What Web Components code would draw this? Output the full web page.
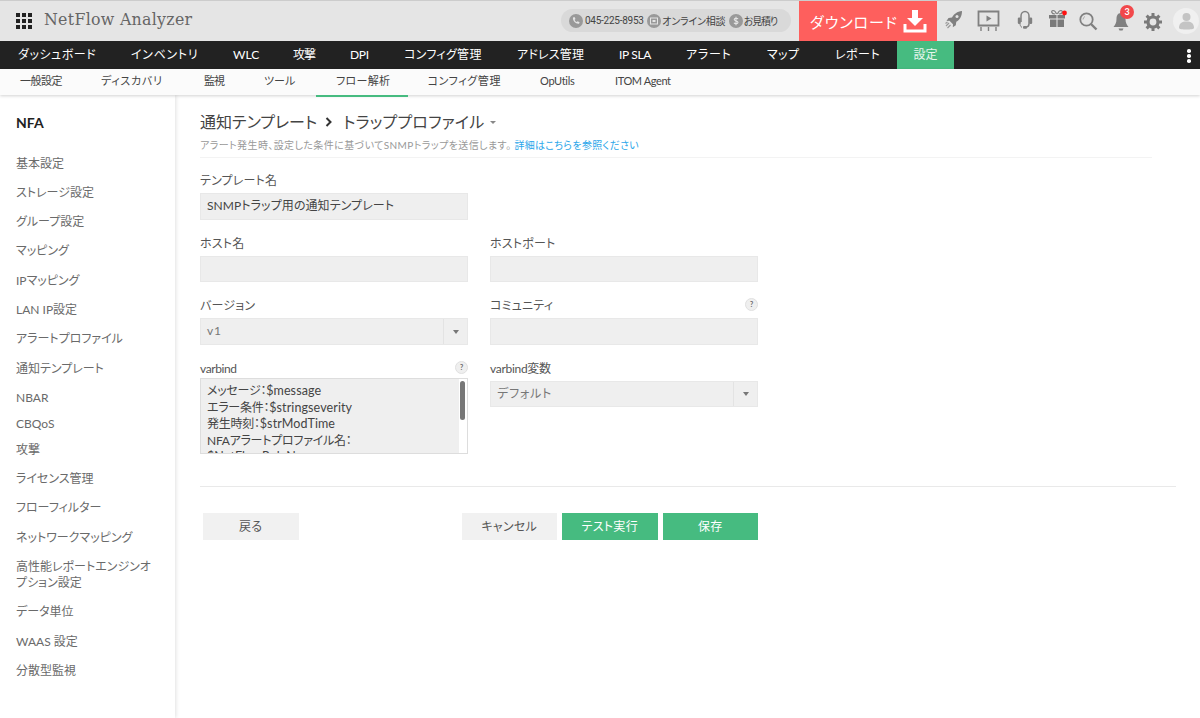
<!DOCTYPE html>
<html lang="ja"><head><meta charset="utf-8"><title>NetFlow Analyzer</title>
<style>
html,body{margin:0;padding:0;background:#fff;height:718px;overflow:hidden}
body{font-family:Lato,"Noto Sans CJK JP",sans-serif;font-feature-settings:"palt";color:#555;font-size:12px}
</style></head><body>
<nf-header></nf-header>
<nf-nav></nf-nav>
<nf-subnav></nf-subnav>
<nf-main>
  <nf-sidebar slot="side"></nf-sidebar>
  <nf-form></nf-form>
</nf-main>
<script>
function def(name,html){customElements.define(name,class extends HTMLElement{constructor(){super();this.attachShadow({mode:'open'}).innerHTML=html;}});}
const ic={
phone:'<svg width="14" height="14" viewBox="0 0 14 14"><circle cx="7" cy="7" r="7" fill="#999"/><path d="M4 3.600l1.500-.6 1 2-.9.8c.3 1 1.200 1.900 2.200 2.300l.8-.9 2 1-.6 1.600c-3 .6-6.600-3-6-6.200z" fill="#e4e4e4"/></svg>',
chat:'<svg width="14" height="14" viewBox="0 0 14 14"><circle cx="7" cy="7" r="7" fill="#999"/><rect x="3.500" y="4" width="7" height="6" fill="none" stroke="#e4e4e4"/><rect x="5.500" y="6" width="3" height="2" fill="#e4e4e4"/></svg>',
dollar:'<svg width="14" height="14" viewBox="0 0 14 14"><circle cx="7" cy="7" r="7" fill="#999"/><path d="M9 5c-.4-1-3.800-1.200-3.800.6 0 1.700 3.800 1 3.800 2.800 0 1.700-3.500 1.500-4 .4M7 2.800v8.400" fill="none" stroke="#e4e4e4" stroke-width="1.100"/></svg>'
};
def('nf-header',`<style>
:host{display:flex;align-items:stretch;height:40px;background:#e5e5e5;border-top:1px solid #ccc;position:relative}
.grid{display:grid;grid-template-columns:repeat(3,4px);grid-auto-rows:4px;gap:2px;margin:12px 12px 0 16px;height:16px}
.grid i{background:#222;display:block}
.title{font:17px/37px "DejaVu Serif",serif;letter-spacing:.3px;color:#666;transform-origin:left center;transform:scaleX(.93);width:160px;white-space:nowrap}
.pill{margin:8px 8px 0 auto;height:23px;width:230px;box-sizing:border-box;border-radius:12px;background:#d9d9d9;display:flex;align-items:center;padding-left:8px;font-size:10px;letter-spacing:-.2px;color:#444;white-space:nowrap}
.pill svg{flex:none;margin-right:1px}.pill svg:first-child{margin-right:2px}.pill span{margin-right:3.500px}
.num{font-family:Roboto,sans-serif;letter-spacing:-.25px;font-size:10px}
.est{letter-spacing:-1.200px}
.dl{width:138px;background:#fe5f5d;color:#fff;font-size:15px;display:flex;align-items:center;padding-left:11px;box-sizing:border-box;gap:5px;letter-spacing:1px}
.icons{display:flex;align-items:center;width:263px;position:relative}
.icons svg{position:absolute}
.badge{position:absolute;left:183px;top:4px;width:14px;height:14px;border-radius:50%;background:#f2484b;color:#fff;font:bold 9px/14px Lato,sans-serif;text-align:center}
</style>
<div class="grid"><i></i><i></i><i></i><i></i><i></i><i></i><i></i><i></i><i></i></div>
<div class="title">NetFlow Analyzer</div>
<div class="pill">${ic.phone}<span class="num">045-225-8953</span>${ic.chat}<span>オンライン相談</span>${ic.dollar}<span class="est">お見積り</span></div>
<div class="dl"><span>ダウンロード</span><svg width="24" height="24" viewBox="0 0 24 24"><path d="M9 1h6v8h5l-8 8-8-8h5z" fill="#fff"/><path d="M2 15v7h20v-7" fill="none" stroke="#fff" stroke-width="3"/></svg></div>
<div class="icons">
<svg style="left:7px;top:9px" width="20" height="20" viewBox="0 0 20 20"><path d="M18 1c-5 .5-8 3-10 6.500L4.500 8 2.500 11l3-.2 3.500 3.500-.2 3 3-2 .5-3.500C16 9.800 18 6 18 1z" fill="#808080"/><circle cx="13" cy="6.500" r="1.500" fill="#e5e5e5"/><path d="M5 13l-3 3M6.500 15l-3 3M3.500 12l-2 1.500" stroke="#999" stroke-width="1.200"/></svg>
<svg style="left:40px;top:9px" width="23" height="22" viewBox="0 0 23 22"><path d="M1.500 1.500h20v14h-20z" fill="none" stroke="#808080" stroke-width="1.800"/><path d="M9.500 5.500l5 3-5 3z" fill="#808080"/><path d="M4 17v4M11.500 17v4M19 17v4" stroke="#808080" stroke-width="1.400"/></svg>
<svg style="left:80px;top:9px" width="16" height="22" viewBox="0 0 16 22"><path d="M4 12V6a4 4.500 0 0 1 8 0v8c0 2.500-1.500 3-3.500 3.500" fill="none" stroke="#808080" stroke-width="1.500"/><path d="M5 17.500c-1.500-1-2-2.500-2-4" fill="none" stroke="#808080" stroke-width="1"/><rect x=".8" y="7.500" width="3" height="6.500" rx="1.200" fill="#808080"/><rect x="12.200" y="7.500" width="3" height="6.500" rx="1.200" fill="#808080"/><rect x="6" y="16" width="4" height="2.800" rx="1" fill="#808080"/></svg>
<svg style="left:111px;top:8px" width="20" height="20" viewBox="0 0 20 20"><path d="M7 5C3 5 3 1.500 5 1.500S8 3.500 8.500 5M11 5c4 0 4-3.500 2-3.500S10 3.500 9.500 5" fill="none" stroke="#808080" stroke-width="1.200"/><path d="M1 6h7.500v3.500H1zM9.500 6H17v3.500H9.500zM2 10.500h6.500V18H2zM9.500 10.500H16V18H9.500z" fill="#7a7a7a"/><circle cx="16.500" cy="4" r="2.400" fill="#f11"/></svg>
<svg style="left:142px;top:11px" width="19" height="20" viewBox="0 0 19 20"><circle cx="7.500" cy="7.500" r="6.200" fill="none" stroke="#808080" stroke-width="1.800"/><path d="M12 12l5.500 5.500" stroke="#808080" stroke-width="2.400"/><path d="M4 7.500a3.500 3.500 0 0 1 2-3" fill="none" stroke="#aaa"/></svg>
<svg style="left:175px;top:11px" width="18" height="20" viewBox="0 0 18 20"><path d="M9 1c3.500 0 4.500 3 4.500 6 0 4 1.500 6 3 8H1.500c1.500-2 3-4 3-8 0-3 1-6 4.500-6z" fill="#808080"/><path d="M6.500 16.500h5l-1 2h-3z" fill="#808080"/></svg>
<div class="badge">3</div>
<svg style="left:206px;top:11px" width="20" height="20" viewBox="0 0 20 20"><circle cx="10" cy="10" r="5" fill="none" stroke="#7a7a7a" stroke-width="3.200"/><path d="M10 1v3.500M10 15.500V19M1 10h3.500M15.500 10H19M3.600 3.600l2.500 2.500M13.900 13.900l2.500 2.500M3.600 16.400l2.500-2.500M13.900 6.100l2.500-2.500" stroke="#7a7a7a" stroke-width="3"/></svg>
<svg style="left:235px;top:6px" width="28" height="28" viewBox="0 0 28 28"><circle cx="14" cy="14" r="13" fill="#f0f0f0"/><circle cx="14.500" cy="10" r="4" fill="#c4c4c4"/><path d="M7 21c0-5 3-6.500 7.500-6.500S22 16 22 21c0 2-15 2-15 0z" fill="#c4c4c4"/></svg>
</div>`);
const navItems=[['ダッシュボード',78],['インベントリ',67],['WLC',25],['攻撃',22],['DPI',19],['コンフィグ管理',78],['アドレス管理',67],['IP SLA',32],['アラート',46],['マップ',33],['レポート',46]];
const navLs=[.5,.7,0,-1,-.3,.3,.2,-.35,.75,.35,.5];
def('nf-nav',`<style>
:host{display:flex;height:28px;background:#222;color:#fff;font-size:12px;line-height:28px;position:relative;white-space:nowrap;padding-left:18px}
a{display:block;margin-right:35px;flex:none}
a.on{background:#46bb80;width:57px;text-align:center;margin:0 0 0 -19px;color:#e8f6ee}
.dots{margin:8px 6px 0 auto;width:10px;display:grid;gap:2px;grid-auto-rows:3px;justify-items:center}
.dots i{width:3.500px;height:3.500px;border-radius:50%;background:#fff}
</style>${navItems.map(([t,w],i)=>`<a style="width:${w}px;letter-spacing:${navLs[i]}px">${t}</a>`).join('')}<a class="on">設定</a><div class="dots"><i></i><i></i><i></i></div>`);
const subItems=[['一般設定',-.5],['ディスカバリ',.7],['監視',-1],['ツール',0],['フロー解析',.3],['コンフィグ管理',.6],['OpUtils',-.3],['ITOM Agent',-.4]];
const subW=[81,103,60,72,91.500,112.500,75,96];
def('nf-subnav',`<style>
:host{display:flex;height:26px;background:#fbfbfb;color:#444;font-size:11px;line-height:24px;box-shadow:0 1px 3px rgba(0,0,0,.18);position:relative;z-index:2;white-space:nowrap}
a{display:block;padding:0 0 0 20px;box-sizing:border-box;height:28px;flex:none}
a.on{border-bottom:2px solid #46bb80}
</style>${subItems.map(([t,l],i)=>`<a class="${i==4?'on':''}" style="width:${subW[i]}px;letter-spacing:${l}px">${t}</a>`).join('')}`);
def('nf-main',`<style>
:host{display:flex;height:623px}
.s{display:block;flex:none;width:175px}
.c{display:block;flex:1;min-width:0}
</style><div class="s"><slot name="side"></slot></div><div class="c"><slot></slot></div>`);
const side=[['基本設定'],['ストレージ設定'],['グループ設定'],['マッピング'],['IPマッピング'],['LAN IP設定'],['アラートプロファイル'],['通知テンプレート'],['NBAR'],['CBQoS',1],['攻撃',1],['ライセンス管理'],['フローフィルター'],['ネットワークマッピング'],['高性能レポートエンジンオプション設定'],['データ単位'],['WAAS 設定'],['分散型監視']];
def('nf-sidebar',`<style>
:host{display:block;height:100%;box-sizing:border-box;padding:19px 20px 0 16px;background:#fff;box-shadow:1px 0 4px rgba(0,0,0,.12);color:#6a6a6a}
h2{margin:0 0 17px;font:bold 14px/18px Lato,"Noto Sans CJK JP",sans-serif;color:#222}
div{font-size:12px;line-height:16px;padding:6.650px 0}
div.s{padding:3.350px 0 6.650px}
</style><h2>NFA</h2>${side.map(([t,s])=>`<div class="${s?'s':''}">${t}</div>`).join('')}`);
def('nf-field',`<style>
:host{display:block;width:268px;position:relative}
.l{display:block;font-size:12px;line-height:14px;color:#555;height:19px;letter-spacing:.2px}
:host([short]) .l{height:16.500px}
</style><span class="l"><slot name="label"></slot></span><slot></slot><slot name="q"></slot>`);
def('nf-input',`<style>
:host{display:block;width:266px;height:24.500px;background:#efefef;border:1px solid #e8e8e8;font-size:12px;line-height:24.500px;color:#444;letter-spacing:.08px}
span{padding-left:6px}
</style><span><slot></slot></span>`);
def('nf-select',`<style>
:host{display:flex;width:266px;height:24.500px;background:#efefef;border:1px solid #e8e8e8;font-size:12px;line-height:24.500px;color:#777;letter-spacing:.8px}
span{flex:1;padding-left:6px}
b{width:23px;border-left:1px solid #e3e3e3;display:flex;align-items:center;justify-content:center}
b::after{content:"";border:3.500px solid transparent;border-top:4px solid #777;margin-top:4px}
</style><span><slot></slot></span><b></b>`);
def('nf-textarea',`<style>
:host{display:block;width:266px;height:74px;background:#efefef;border:1px solid #ddd;overflow:hidden;position:relative;font-size:12px;line-height:16.500px;color:#444;letter-spacing:-.25px}
.t{padding:4px 6px}
.bar{position:absolute;right:0;top:0;bottom:0;width:8px;background:#fff}
.bar i{position:absolute;left:1px;top:2px;width:5px;height:39px;border-radius:3px;background:#777}
::slotted(span){font-size:12.500px;letter-spacing:.1px}
</style><div class="t"><slot></slot></div><div class="bar"><i></i></div>`);
def('nf-btn',`<style>
:host{display:block;width:95.500px;height:27px;background:#f1f1f1;color:#555;font-size:12px;line-height:27px;text-align:center;letter-spacing:.3px}
:host([green]){background:#46bb80;color:#fff}
</style><slot></slot>`);
const q='<span slot="q" style="position:absolute;right:0;top:-1px;width:13px;height:13px;border-radius:50%;background:#efefef;border:1px solid #e0e0e0;box-sizing:border-box;font:bold 7px/11px Lato,sans-serif;text-align:center;color:#666">?</span>';
def('nf-form',`<style>
:host{display:block;padding:17px 24px 0 25px}
h1{margin:0;font-weight:400;font-size:16px;line-height:20px;color:#444;display:flex;align-items:center;white-space:nowrap}
h1 svg{margin:0 10px 0 8px}
h1 span+svg+span{letter-spacing:.2px}
h1 i{border:3px solid transparent;border-top:3.500px solid #888;margin:4px 0 0 6px}
.d{font-size:10px;line-height:14px;color:#999;margin-top:6px;padding-bottom:5px;border-bottom:1px solid #f3f3f3;width:952px;letter-spacing:.4px}
.d a{color:#2aa6ea;letter-spacing:.3px}
.row{display:flex;gap:22px;margin-top:17px}
.hr{border-top:1px solid #e9e9e9;margin-top:32px}
.btns{display:flex;margin:26px 0 0 3px;width:555px;gap:5px}
.btns nf-btn:first-child{margin-right:auto}
</style>
<h1><span>通知テンプレート</span><svg width="8" height="10" viewBox="0 0 8 10"><path d="M1.500 1l4 4-4 4" fill="none" stroke="#333" stroke-width="2"/></svg><span>トラッププロファイル</span><i></i></h1>
<div class="d">アラート発生時、設定した条件に基づいてSNMPトラップを送信します。 <a>詳細はこちらを参照ください</a></div>
<nf-field style="margin-top:16px"><span slot="label">テンプレート名</span><nf-input>SNMPトラップ用の通知テンプレート</nf-input></nf-field>
<div class="row"><nf-field><span slot="label">ホスト名</span><nf-input></nf-input></nf-field><nf-field><span slot="label">ホストポート</span><nf-input></nf-input></nf-field></div>
<div class="row"><nf-field><span slot="label">バージョン</span><nf-select>v1</nf-select></nf-field><nf-field><span slot="label">コミュニティ</span><nf-input></nf-input>${q}</nf-field></div>
<div class="row"><nf-field short><span slot="label" style="letter-spacing:-.4px">varbind</span><nf-textarea>メッセージ：<span>$message</span><br>エラー条件：<span>$stringseverity</span><br>発生時刻：<span>$strModTime</span><br>NFAアラートプロファイル名：<br><span>$NetFlowRuleName</span></nf-textarea>${q}</nf-field><nf-field><span slot="label" style="letter-spacing:-.3px">varbind変数</span><nf-select>デフォルト</nf-select></nf-field></div>
<div class="hr"></div>
<div class="btns"><nf-btn>戻る</nf-btn><nf-btn>キャンセル</nf-btn><nf-btn green>テスト実行</nf-btn><nf-btn green>保存</nf-btn></div>`);
</script>
</body></html>
